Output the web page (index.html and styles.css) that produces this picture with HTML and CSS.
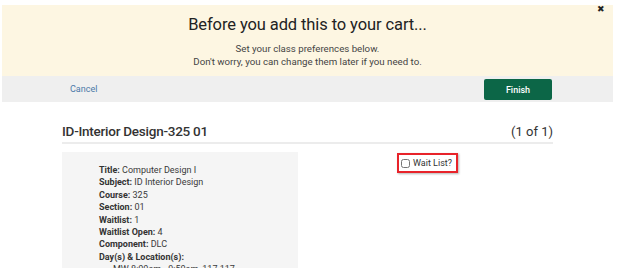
FILE: index.html
```html
<!DOCTYPE html>
<html>
<head>
<meta charset="utf-8">
<link rel="stylesheet" href="styles.css">
</head>
<body>
<div class="modal">
  <div class="banner">
    <button class="close" aria-label="Close">&#x2716;</button>
    <h1 class="banner-title">Before you add this to your cart...</h1>
    <p class="banner-text">Set your class preferences below.<br>Don't worry, you can change them later if you need to.</p>
  </div>
  <div class="actions">
    <a class="cancel" href="#">Cancel</a>
    <button class="finish">Finish</button>
  </div>
  <div class="content">
    <div class="course-head">
      <h2 class="course-title">ID-Interior Design-325 01</h2>
      <span class="course-count">(1 of 1)</span>
    </div>
    <div class="course-body">
      <div class="details">
        <div class="row"><b>Title:</b> Computer Design I</div>
        <div class="row"><b>Subject:</b> ID Interior Design</div>
        <div class="row"><b>Course:</b> 325</div>
        <div class="row"><b>Section:</b> 01</div>
        <div class="row"><b>Waitlist:</b> 1</div>
        <div class="row"><b>Waitlist Open:</b> 4</div>
        <div class="row"><b>Component:</b> DLC</div>
        <div class="row"><b>Day(s) &amp; Location(s):</b></div>
        <div class="row indent">MW 8:00am - 9:50am, 117 117</div>
      </div>
      <div class="prefs">
        <label class="waitlist"><input type="checkbox" class="cb"> Wait List?</label>
      </div>
    </div>
  </div>
</div>
</body>
</html>
```

FILE: styles.css
```css
* { box-sizing: border-box; }
html, body { margin: 0; padding: 0; background: #fff; }
body {
  font-family: Roboto, "Liberation Sans", sans-serif;
  color: #333;
  width: 624px;
  height: 268px;
  overflow: hidden;
}
.modal {
  width: 611px;
  margin-left: 2px;
}
.banner {
  position: relative;
  margin-top: 5px;
  height: 71px;
  background: #fdf6e2;
  text-align: center;
  padding-top: 9px;
}
.close {
  position: absolute;
  top: -1px;
  right: 8px;
  border: 0;
  background: none;
  padding: 0;
  font-size: 9px;
  color: #222;
  cursor: pointer;
}
.banner-title {
  margin: 0;
  font-size: 16.5px;
  font-weight: 400;
  line-height: 22px;
  color: #222;
  letter-spacing: -0.1px;
}
.banner-text {
  margin: 6px 0 0;
  font-size: 9.7px;
  line-height: 13px;
  color: #444;
}
.actions {
  height: 26px;
  background: #efefef;
  display: flex;
  align-items: center;
  justify-content: space-between;
  padding: 0 61px 0 68px;
}
.cancel {
  font-size: 9px;
  color: #4b79a8;
  text-decoration: none;
}
.finish {
  width: 68px;
  height: 21px;
  background: #0c6647;
  color: #fff;
  border: 0;
  border-radius: 2px;
  font-family: inherit;
  font-size: 9px;
  font-weight: 500;
  margin-top: 1px;
}
.content {
  padding: 18px 60px 0 60px;
}
.course-head {
  display: flex;
  justify-content: space-between;
  align-items: baseline;
  border-bottom: 2px solid #ececec;
  height: 24px;
}
.course-title {
  margin: 0;
  font-size: 13.5px;
  font-weight: 500;
  line-height: 22px;
  letter-spacing: -0.25px;
  color: #333;
}
.course-count {
  font-size: 13px;
  line-height: 22px;
  color: #333;
}
.course-body {
  display: flex;
  margin-top: 8px;
}
.details {
  width: 236px;
  height: 140px;
  background: #f5f5f5;
  padding: 12px 0 0 37px;
  font-size: 9px;
  line-height: 12.4px;
  color: #3a3a3a;
}
.details b { color: #333; font-weight: 700; }
.indent { padding-left: 14px; }
.prefs {
  margin-left: 99px;
  padding-top: 1px;
}
.waitlist {
  display: flex;
  align-items: center;
  gap: 3px;
  width: 61px;
  height: 20px;
  border: 2px solid #e8232a;
  box-shadow: 1px 1px 2px rgba(0,0,0,0.3);
  padding-left: 2px;
  font-size: 9px;
  color: #333;
}
.cb {
  margin: 0;
  width: 9px;
  height: 9px;
}
```
